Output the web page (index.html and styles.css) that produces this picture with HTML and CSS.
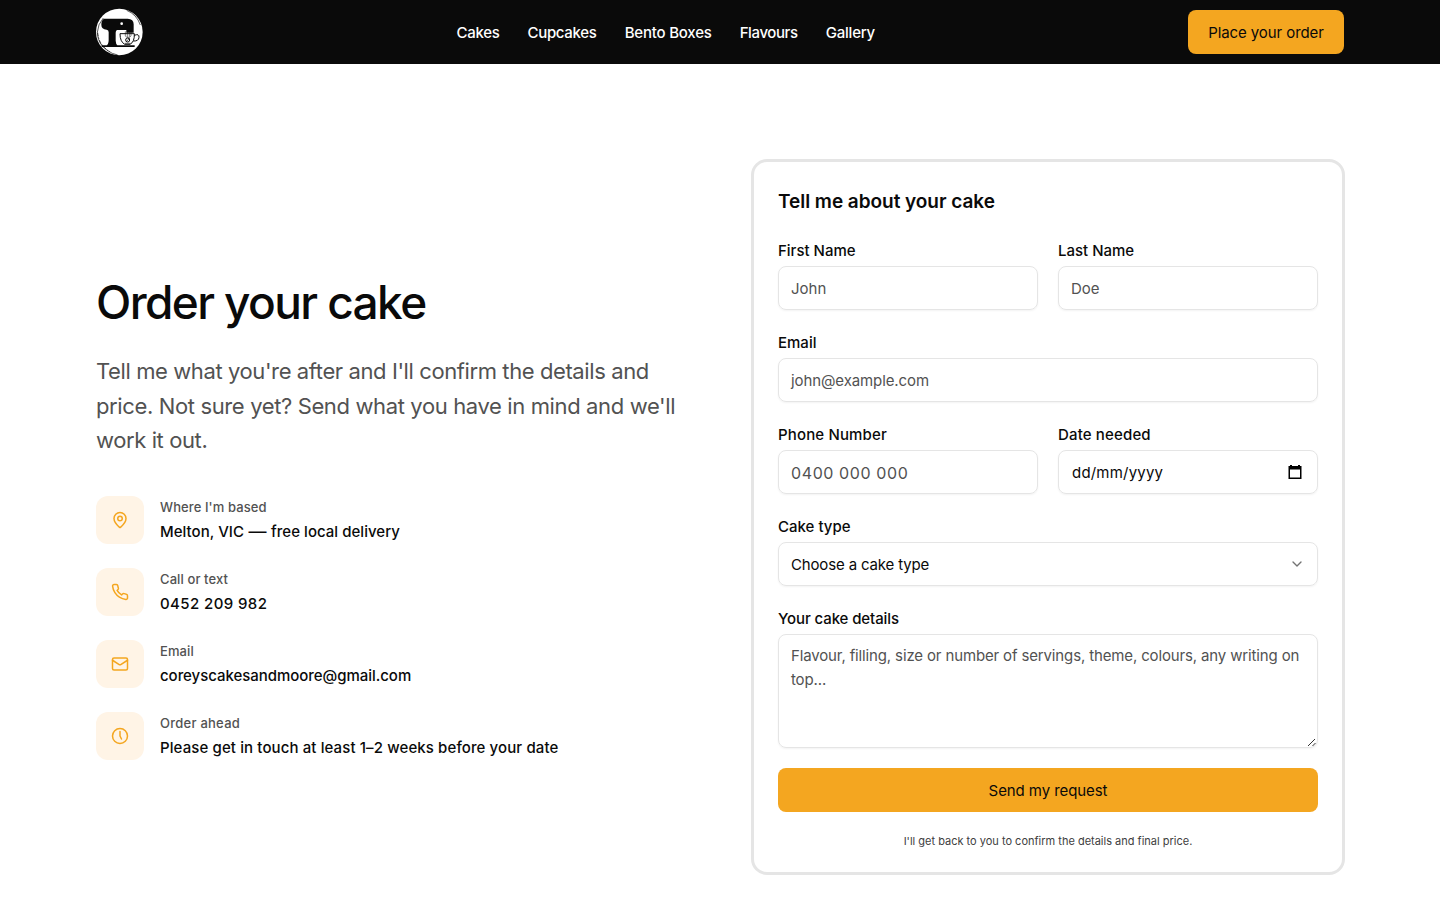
FILE: index.html
```html
<!DOCTYPE html>
<html lang="en-AU">
<head>
<meta charset="utf-8">
<title>Order your cake</title>
<link rel="stylesheet" href="styles.css">
</head>
<body>
<header class="header">
  <a class="brand" href="#">
    <svg class="logo" viewBox="0 0 180 180" aria-label="Cakes and Moore">
      <circle cx="88" cy="90" r="70" fill="#fff"/>
      <path d="M40 48q-17 19-18 43q1 36 30 54q14 11 31 14M110 25q30 12 41 44" fill="none" stroke="#0a0a0a" stroke-width="2"/>
      <path d="M23 92q3 37 37 58" fill="none" stroke="#0a0a0a" stroke-width="2" stroke-dasharray="11 3 5 4"/>
      <path d="M42 50h71q18 1 18 17v25h-22v-8H82q-5 0-5 8v24q0 11 7 16H48q8-5 8-17V91q0-7-6-8q-16-1-16-15q0-14 8-18zM35 130h99v5H35z" fill="#0a0a0a"/>
      <circle cx="95" cy="65" r="4" fill="#fff"/>
      <path d="M90 95h43q1 25-13 32h-16q-14-8-14-32zM133 100q15-6 14 6q-1 12-17 11" fill="#fff" stroke="#0a0a0a" stroke-width="3"/>
      <path d="M106 88v14l4 4h9l4-4V88M112 88v17M118 88v17" fill="none" stroke="#0a0a0a" stroke-width="1.500"/>
      <circle cx="113" cy="114" r="6" fill="none" stroke="#0a0a0a" stroke-width="3"/>
      <path d="M108 120l11-12M104 124h17" stroke="#0a0a0a" stroke-width="2"/>
    </svg>
  </a>
  <nav class="nav">
    <a href="#" class="n1">Cakes</a><a href="#" class="n2">Cupcakes</a><a href="#" class="n3">Bento Boxes</a><a href="#" class="n4">Flavours</a><a href="#" class="n5">Gallery</a>
  </nav>
  <a class="button order" href="#">Place your order</a>
</header>
<main class="main">
  <section class="intro">
    <h1>Order your cake</h1>
    <p class="lead"><span class="l1">Tell me what you're after and I'll confirm the details and</span><br><span class="l2">price. Not sure yet? Send what you have in mind and we'll</span><br><span class="l3">work it out.</span></p>
    <ul class="contacts">
      <li><span class="tile"><svg viewBox="0 0 24 24"><path d="M20 10c0 4.993-5.539 10.193-7.399 11.799a1 1 0 0 1-1.202 0C9.539 20.193 4 14.993 4 10a8 8 0 0 1 16 0"/><circle cx="12" cy="10" r="3"/></svg></span><div><small>Where I'm based</small><b class="c1">Melton, VIC <span class="dash">—</span> free local delivery</b></div></li>
      <li><span class="tile"><svg viewBox="0 0 24 24"><path d="M22 16.92v3a2 2 0 0 1-2.18 2 19.79 19.79 0 0 1-8.63-3.07 19.5 19.5 0 0 1-6-6 19.79 19.79 0 0 1-3.07-8.67A2 2 0 0 1 4.11 2h3a2 2 0 0 1 2 1.72 12.84 12.84 0 0 0 .7 2.81 2 2 0 0 1-.45 2.11L8.09 9.91a16 16 0 0 0 6 6l1.27-1.27a2 2 0 0 1 2.11-.45 12.84 12.84 0 0 0 2.81.7A2 2 0 0 1 22 16.92z"/></svg></span><div><small>Call or text</small><b class="c2">0452 209 982</b></div></li>
      <li><span class="tile"><svg viewBox="0 0 24 24"><rect x="2" y="4" width="20" height="16" rx="2"/><path d="m22 7-8.97 5.7a1.94 1.94 0 0 1-2.06 0L2 7"/></svg></span><div><small>Email</small><b class="c3">coreyscakesandmoore@gmail.com</b></div></li>
      <li><span class="tile"><svg viewBox="0 0 24 24"><circle cx="12" cy="12" r="10"/><path d="M12 6v6l2 4"/></svg></span><div><small class="ahead">Order ahead</small><b class="c4">Please get in touch at least 1–2 weeks before your date</b></div></li>
    </ul>
  </section>
  <form class="card">
    <h2>Tell me about your cake</h2>
    <div class="row">
      <label class="field">First Name<span class="control hint">John</span></label>
      <label class="field">Last Name<span class="control hint">Doe</span></label>
    </div>
    <label class="field">Email<span class="control hint mail">john@example.com</span></label>
    <div class="row">
      <label class="field wide">Phone Number<span class="control hint phone">0400 000 000</span></label>
      <label class="field wide">Date needed<span class="control date">dd/mm/yyyy<svg class="calendar" viewBox="0 0 16 16"><path fill-rule="evenodd" d="M3 1h2v1h6V1h2v1h1.500v13h-13V2H3zM3 5.500v8h10v-8z"/></svg></span></label>
    </div>
    <label class="field">Cake type<span class="control choice">Choose a cake type<svg class="chevron" viewBox="0 0 24 24"><path d="m6 9 6 6 6-6"/></svg></span></label>
    <label class="field details">Your cake details<span class="control hint area">Flavour, filling, size or number of servings, theme, colours, any writing on<br>top...<svg class="grip" viewBox="0 0 10 10"><path d="M1 9 8 2M5.500 9 8.500 6"/></svg></span></label>
    <button class="button send" type="button">Send my request</button>
    <p class="note">I'll get back to you to confirm the details and final price.</p>
  </form>
</main>
</body>
</html>
```
FILE: styles.css
```css
*{box-sizing:border-box}
body{margin:0;background:#fff;color:#0a0a0a;font:400 15px/24px Inter,"Liberation Sans",sans-serif;overflow:hidden}
a{color:inherit;text-decoration:none}
h1,h2,p,ul{margin:0;padding:0}
.header{height:64px;background:#0a0a0a;padding:0 96px;display:grid;grid-template-columns:360px 1fr 156px;align-items:center}
.logo{display:block;width:60px;height:60px;margin-left:-6px}
.nav{display:flex;gap:28px;color:#fff;font-weight:500;white-space:nowrap;padding:2px 0 0 .5px}
.n1,.n2{letter-spacing:-.3px}
.n3{letter-spacing:-.2px}
.n4{letter-spacing:-.4px}
.n5{letter-spacing:-.2px}
.button{display:flex;height:44px;align-items:center;justify-content:center;border:0;border-radius:8px;background:#f4a620;color:#0a0a0a;font:400 15px/24px Inter,"Liberation Sans",sans-serif;letter-spacing:-.08px;white-space:nowrap;padding:2px 0 0}
.main{display:grid;grid-template-columns:592px 594px;justify-content:space-between;align-items:center;padding:95px 95px 0 96px}
.intro{white-space:nowrap;padding-top:4px}
h1{font-size:46px;line-height:48px;font-weight:500;letter-spacing:-1.600px}
.lead{margin-top:28px;color:#525252;font-size:22px;line-height:34.500px;letter-spacing:-.4px}
.l2{letter-spacing:-.37px}
.contacts{list-style:none;margin-top:38px;display:grid;gap:24px}
.contacts li{display:flex;gap:16px;height:48px}
.tile{width:48px;height:48px;border-radius:12px;background:#fff4e6;display:grid;place-items:center;padding-top:1px}
.tile svg{width:18px;height:18px;fill:none;stroke:#f4a620;stroke-width:2;stroke-linecap:round;stroke-linejoin:round}
.contacts small{display:block;font-size:13px;line-height:20px;font-weight:500;letter-spacing:.1px;color:#525252;margin-top:1px}
.contacts .ahead{letter-spacing:.25px}
.contacts b{display:block;font-weight:500;line-height:24px;margin-top:3px}
.c1{letter-spacing:.03px}
.dash{display:inline-block;transform:scaleX(1.200);margin:0 2px}
.c2{letter-spacing:.4px}
.c3{letter-spacing:-.04px}
.c4{letter-spacing:.11px}
.card{border:3px solid #e5e5e5;border-radius:16px;padding:24px;height:716px;display:flex;flex-direction:column;gap:20px}
h2{font-size:19px;line-height:32px;font-weight:600;letter-spacing:-.04px}
.row{display:grid;grid-template-columns:1fr 1fr;gap:20px}
.field{display:block;font-weight:500;line-height:24px;padding-top:1px}
.wide{letter-spacing:.15px}
.details{letter-spacing:-.1px}
.control{display:flex;align-items:center;justify-content:space-between;height:44px;margin-top:3px;border:1px solid #e5e5e5;border-radius:8px;padding:2px 12px 0;font-weight:400;letter-spacing:0;box-shadow:0 1px 2px #0000000d;white-space:nowrap}
.hint{color:#525252}
.mail{letter-spacing:-.1px}
.phone{font-size:16px;letter-spacing:.6px}
.date{letter-spacing:.2px;padding-left:13px}
.choice{letter-spacing:-.15px}
.calendar{width:16px;height:16px;margin:-2px 2px 0 0}
.chevron{width:16px;height:16px;margin-top:-2px;fill:none;stroke:#737373;stroke-width:2;stroke-linecap:round;stroke-linejoin:round}
.area{display:block;height:114px;padding-top:9px;position:relative;letter-spacing:-.14px}
.grip{position:absolute;right:0;bottom:0;width:10px;height:10px;fill:none;stroke:#333}
.send{width:100%;flex-shrink:0}
.note{text-align:center;font-size:11px;line-height:18px;color:#404040}
```
